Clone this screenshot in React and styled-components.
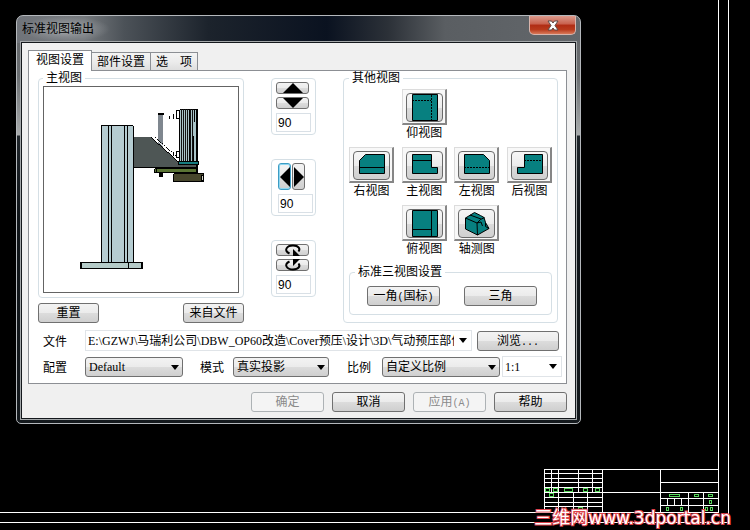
import React, { useState } from "react";
import styled, { createGlobalStyle, css } from "styled-components";

const GlobalStyle = createGlobalStyle`
    * {
        box-sizing: border-box;
    }

    body {
        margin: 0;
        background: #000;
    }

    body, button, input, select {
        font-family: "Liberation Serif", "Noto Sans CJK SC", serif;
        font-size: 12px;
        line-height: 14px;
        color: #000;
    }
`

const buttonFace = css`
    background: linear-gradient(#f3f3f3, #ebebeb 50%, #dcdcdc 51%, #cfcfcf);
    border: 1px solid #707070;
    border-radius: 3px;
`

/* drawing sheet behind the dialog */

const Desktop = styled.main`
    position: relative;
    min-height: 100vh;
    padding: 15px 169px 105px 16px;
    background: #000;
`

const OuterFrame = styled.div`
    position: absolute;
    inset: 0 21px 7px 0;
    border: solid #fff;
    border-width: 0 1px 1px 0;
`

const InnerFrame = styled.div`
    position: absolute;
    inset: 0 31px 17px 0;
    display: flex;
    justify-content: flex-end;
    align-items: flex-end;
    border: solid #fff;
    border-width: 0 1px 1px 0;
`

const Watermark = styled.div`
    position: absolute;
    right: 19px;
    bottom: 3px;
    font: 17px/18px "DejaVu Sans", "Noto Sans CJK SC", sans-serif;
    color: #fff;
    -webkit-text-stroke: 2px #dc404a;
    paint-order: stroke fill;

    span {
        font-size: 18px;
    }
`

/* window chrome */

const Dialog = styled.section`
    position: relative;
    min-width: 565px;
    padding: 0 4px 4px;
    border: 1px solid #b4b8bc;
    border-radius: 7px 7px 5px 5px;
    background:
        linear-gradient(90deg, #70747a, #74787c 12%, #4c5258 19%, #1c232c 34%, #0a1220 55%, #2c3138 66%, #5a5e62 76%, #63676b) top / 100% 27px no-repeat,
        linear-gradient(#66696c 27px, #6a6e71 60px, #a8abac 119px, #20262b 120px, #101519 200px, #14191d);
`

const TitleBar = styled.header`
    display: flex;
    justify-content: space-between;
    align-items: flex-start;
    height: 26px;
`

const Title = styled.h1`
    margin: 0;
    padding: 5px 16px 5px 1px;
    font-size: 12px;
    font-weight: normal;
    line-height: 16px;
    background: radial-gradient(closest-side, rgba(176, 180, 184, 0.9), rgba(150, 154, 158, 0.5) 60%, rgba(130, 134, 138, 0));
`

const CloseButton = styled.button`
    display: flex;
    justify-content: center;
    align-items: center;
    width: 47px;
    height: 19px;
    padding: 0;
    border: 1px solid #d8b4ac;
    border-top: 0;
    border-radius: 0 0 5px 5px;
    background: linear-gradient(#dc9a8c, #c8604c 45%, #b02c14 50%, #b83a1c 75%, #d87858);
`

const Client = styled.div`
    padding: 7px 8px 6px 6px;
    border: 1px solid #14181c;
    outline: 1px solid #a4a8aa;
    background: #f0f0f0;
`

/* tabs */

const TabList = styled.div`
    display: flex;
    align-items: flex-end;
`

const Tab = styled.button`
    height: 18px;
    padding: 0 5px;
    border: 1px solid #8c8f94;
    border-bottom: 0;
    background: linear-gradient(#f4f4f4, #ececec 50%, #dedede);

    & + & {
        border-left-width: 0;
    }

    ${props => props.$active && css`
        height: 21px;
        margin-bottom: -1px;
        padding: 0 7px 2px;
        background: #fff;
        z-index: 1;
    `}
`

const Panel = styled.div`
    padding: 0 5px 6px 9px;
    border: 1px solid #8c8f94;
    background: #fff;
`

const Columns = styled.div`
    display: grid;
    grid-template-columns: minmax(206px, 1fr) 45px 215px;
    gap: 27px;
    padding-right: 3px;
`

const Column = styled.div`
    display: flex;
    flex-direction: column;
    gap: 5px;
`

const Group = styled.fieldset`
    min-width: 0;
    margin: 0;
    padding: ${props => props.$pad || "1px 4px 4px"};
    border: 1px solid #d5dfe5;
    border-radius: 4px;
`

const Legend = styled.legend`
    padding: 0 3px;
    line-height: 14px;
`

const Preview = styled.div`
    height: 207px;
    border: 1px solid #646464;
    background: #fff;

    svg {
        display: block;
        width: 100%;
        height: 100%;
    }
`

const ButtonRow = styled.div`
    display: flex;
    justify-content: ${props => props.$justify || "space-between"};
    gap: 8px;
    padding: ${props => props.$pad || "0"};
`

const Button = styled.button`
    ${buttonFace}
    flex: none;
    width: ${props => props.$width || 73}px;
    height: 20px;
    padding: 0;
    line-height: 16px;

    &:disabled {
        color: #8a8a8a;
        border-color: #adb2b5;
        background: #f4f4f4;
    }
`

const Mono = styled.span`
    font-family: "Liberation Mono", monospace;
    font-size: 10px;
    line-height: 0;
`

/* rotation steppers */

const Steppers = styled.div`
    display: flex;
    flex-direction: column;
    gap: 24px;
    padding-top: 7px;
`

const Stepper = styled.fieldset`
    display: flex;
    flex-direction: column;
    gap: 4px;
    min-width: 0;
    height: 57px;
    margin: 0;
    padding: 3px 1px 3px ${props => props.$indent ? 6 : 4}px;
    border: 1px solid #d5dfe5;
    border-radius: 4px;
`

const StepButtons = styled.div`
    display: flex;
    flex-direction: ${props => props.$row ? "row" : "column"};
    gap: ${props => props.$row ? 1 : 3}px;
`

const StepButton = styled.button`
    ${buttonFace}
    display: flex;
    justify-content: center;
    align-items: center;
    width: ${props => props.$tall ? 13 : 33}px;
    height: ${props => props.$tall ? 27 : 12}px;
    padding: 0;

    svg {
        flex: none;
        overflow: visible;
    }

    ${props => props.$focused && css`
        border-color: #3c9cc4;
        box-shadow: inset 0 0 0 1px #8fd6f0;
    `}
`

const AngleInput = styled.input`
    width: 35px;
    height: 19px;
    padding: 0 1px;
    border: 1px solid #d9e0e6;
    font-family: "Liberation Sans", sans-serif;
`

/* other views */

const ViewGrid = styled.div`
    display: grid;
    grid-template-columns: repeat(4, 45px);
    justify-content: space-between;
    row-gap: 6px;
    padding-bottom: 8px;
`

const View = styled.label`
    grid-column: ${props => props.$column};
    display: flex;
    flex-direction: column;
    align-items: center;
    line-height: 16px;
    white-space: nowrap;
`

const ViewButton = styled.button`
    display: flex;
    width: 45px;
    height: 36px;
    padding: 3px;
    border: 1px solid #dcdcdc;
    border-right: 2px solid #868686;
    border-bottom: 2px solid #868686;
    background: #f8f8f8;
`

const ViewFace = styled.span`
    width: 37px;
    height: 29px;
    flex: none;
    border: 1px solid #6a6a6a;
    border-radius: 4px;
    background: linear-gradient(#f6f6f6, #ececec 50%, #dadada 51%, #d0d0d0);

    svg {
        display: block;
    }
`

/* bottom fields */

const Row = styled.div`
    display: flex;
    align-items: center;
    padding: ${props => props.$pad};
`

const Label = styled.label`
    flex: none;
    width: ${props => props.$width}px;
    padding-top: 2px;
`

const arrow = css`
    content: "";
    border: solid transparent;
    border-width: 5px 4px 0;
    border-top-color: #000;
`

const SelectBox = styled.div`
    position: relative;
    flex: ${props => props.$width} 0 ${props => props.$width}px;
    margin-right: ${props => props.$after}px;

    &::after {
        ${arrow}
        position: absolute;
        top: 8px;
        right: 4px;
        pointer-events: none;
    }
`

const Select = styled.select`
    ${buttonFace}
    appearance: none;
    display: block;
    width: 100%;
    height: 20px;
    padding: 0 16px 0 3px;
`

const Combo = styled.div`
    flex: ${props => props.$width} 0 ${props => props.$width}px;
    display: flex;
    min-width: 0;
    height: 21px;
    margin-right: ${props => props.$after || 0}px;
    border: 1px solid #e0e4e8;
    background: #fff;
`

const ComboInput = styled.input`
    flex: 1;
    min-width: 0;
    padding: 0 0 0 2px;
    border: 0;
    background: none;
`

const ComboButton = styled.button`
    display: flex;
    justify-content: center;
    align-items: center;
    width: 17px;
    padding: 0;
    border: 0;
    background: none;

    &::after {
        ${arrow}
    }
`

const SheetTitleBlock = () => (
    <svg width="174" height="44" viewBox="0 0 174 44" fill="none" shapeRendering="crispEdges" aria-hidden="true">
        <path
            stroke="#fff"
            d="M0 1.500H174M.5 1V44M58.5 1V44M116.5 1V44
               M0 5.500H58M0 10.500H58M0 14.500H58M0 19.500H58M0 24.500H58M0 29.500H58M0 34.500H58M0 38.500H58
               M7.500 1V24M14.500 1V44M34.500 1V24M48.500 1V24M29.500 24V44M43.500 24V44
               M58 24.500H174M116 14.500H174M116 30.500H174M116 37.500H174
               M144.500 24V44M159.500 24V44M123.500 30V37M130.500 30V37M137.500 30V37"
        />
        <path
            stroke="#58d85c"
            d="M1.500 20.500h4v3h-4zM9.500 20.500h4v3h-4zM20.500 20.500h8v3h-8zM39.500 20.500h4v3h-4zM51.500 20.500h4v3h-4z
               M5.500 25.500h4v3h-4zM34.500 39.500h4v3h-4zM125.500 26.500h10v2h-10zM150.500 26.500h4v2h-4zM164.500 26.500h4v2h-4z
               M165.500 32.500h2v3h-2zM122.500 39.500h2v3h-2zM136.500 39.500h2v3h-2zM161.500 39.500h2v3h-2zM166.500 39.500h2v3h-2z"
        />
    </svg>
)

const ModelDrawing = () => (
    <svg viewBox="44 87 195 205" shapeRendering="crispEdges" role="img" aria-label="主视图">
        <path d="M159 113h5v34h-5z" fill="#7f878f" />
        <path d="M159 113h6v2h-6z" />
        <path d="M134 137h18l28 25h18v6h-64z" fill="#4e5655" />
        <path d="M134 167.500h64M152 137.500l28 25" fill="none" stroke="#000" />
        <path d="M154 137l25 22" fill="none" stroke="#fff" />
        <path d="M155.500 137l24 21" fill="none" stroke="#000" strokeDasharray="2 1" />
        <path d="M170.500 116v3M174.500 114v5M177.500 110v9M177 110.500h3M177 118.500h3M174.500 152v4M177.500 151v7M177 151.500h3" stroke="#000" />
        <path d="M180.500 109.500h18v52h-18z" fill="#a9c4c8" stroke="#000" />
        <path d="M182.500 109v52M184.500 109v52M186.500 109v52M188.500 109v52M191.500 109v52M193.500 109v52" stroke="#111" />
        <path d="M190.500 109v52M195.500 109v13M194.500 136v25M197.500 109v52" stroke="#000" />
        <path d="M179.500 161.500h20v3h-20z" fill="#167c80" stroke="#000" />
        <path d="M198.500 164v9" stroke="#000" />
        <path d="M155.500 168.500h43v4h-43z" fill="#5a7434" stroke="#000" />
        <path d="M157.500 168v4M197.500 165v7" stroke="#000" />
        <path d="M160 173h4v4h-4z" />
        <path d="M174.500 173.500h30v8h-30z" fill="#47462c" stroke="#000" />
        <path d="M202 175h2v5h-2z" fill="#d8d8c8" stroke="#000" />
        <path d="M101.500 125.500h32v137h-32z" fill="#b5ccd1" stroke="#000" />
        <path d="M108.500 125v137M111.500 125v137M124.500 125v137M127.500 125v137" stroke="#000" />
        <path d="M80.500 262.500h63v6h-63z" fill="#b5cbc8" stroke="#000" />
        <path d="M81.500 262v7M128.500 262v7M142.500 262v7" stroke="#000" />
    </svg>
)

const stepIcons = {
    up: <svg width="20" height="10"><path d="M10 0l10 10H0z" /></svg>,
    down: <svg width="20" height="10"><path d="M0 0h20L10 10z" /></svg>,
    left: <svg width="10" height="20"><path d="M10 0v20L0 10z" /></svg>,
    right: <svg width="10" height="20"><path d="M0 0l10 10L0 20z" /></svg>,
    rotateUp: (
        <svg width="18" height="12">
            <path d="M5.500 9.500C-1 6.500 3 1.500 9 1.500c6 0 7.500 3.500 5.500 6" fill="none" stroke="#000" strokeWidth="2" />
            <path d="M9 5v7h7z" />
        </svg>
    ),
    rotateDown: (
        <svg width="18" height="12">
            <path d="M5.500 2.500C-1 5.500 3 10.500 9 10.500c6 0 7.500-3.500 5.500-6" fill="none" stroke="#000" strokeWidth="2" />
            <path d="M9 7V0h7z" />
        </svg>
    )
}

const viewShapes = {
    bottom: { body: "M10.500 5.500h25v26h-25z", dashed: "M10 11.500h19M29.500 6v25" },
    right: { body: "M10.500 26.500v-13l6-6h19v19z", solid: "M10 20.500h25" },
    front: { body: "M10.500 7.500h19v13h6v6h-25z", solid: "M10 13.500h19" },
    left: { body: "M10.500 7.500h19l6 6v13h-25z", dashed: "M10 20.500h25" },
    back: { body: "M17.500 7.500h18v19h-25v-6h7z", dashed: "M17 13.500h18" },
    top: { body: "M10.500 5.500h25v26h-25z", solid: "M10 24.500h19M29.500 5v26" },
    iso: {
        body: "M11.500 13l9-5.500 6 3 3.500 2 1.500 5 3.500 6-11.500 6.500-12-6z",
        solid: "M11.500 13l11.500 5 3.500-3.500 4-2M16 10l11 4M23 18l.5 12M23 18l4-1 1.500 4M31.500 17.500v4l3.500 2"
    }
}

const ViewIcon = ({shape}) => {
    const { body, solid, dashed } = viewShapes[shape];
    return (
        <svg width="35" height="27" viewBox="5 5 35 27" fill="none" stroke="#000" aria-hidden="true">
            <path d={body} fill="#078080" />
            {solid && <path d={solid} />}
            {dashed && <path d={dashed} strokeDasharray="2 1" />}
        </svg>
    )
}

const views = [
    { shape: "bottom", name: "仰视图", column: 2 },
    { shape: "right", name: "右视图", column: 1 },
    { shape: "front", name: "主视图", column: 2 },
    { shape: "left", name: "左视图", column: 3 },
    { shape: "back", name: "后视图", column: 4 },
    { shape: "top", name: "俯视图", column: 2 },
    { shape: "iso", name: "轴测图", column: 3 }
]

const steppers = [
    { name: "上下", icons: ["up", "down"] },
    { name: "左右", icons: ["left", "right"], row: true },
    { name: "旋转", icons: ["rotateUp", "rotateDown"] }
]

const AngleStepper = ({name, icons, row}) => (
    <Stepper $indent={row} aria-label={name}>
        <StepButtons $row={row}>
            {icons.map((icon, i) => (
                <StepButton key={icon} $tall={row} $focused={row && i === 0} aria-label={icon}>
                    {stepIcons[icon]}
                </StepButton>
            ))}
        </StepButtons>
        <AngleInput defaultValue="90" aria-label={name + "角度"} />
    </Stepper>
)

const Dropdown = ({id, width, after, options}) => (
    <SelectBox $width={width} $after={after}>
        <Select id={id}>
            {options.map(option => <option key={option}>{option}</option>)}
        </Select>
    </SelectBox>
)

const tabs = ["视图设置", "部件设置", "选　项"];

export default function App() {
    const [activeTab, setActiveTab] = useState(0);

    return (
        <Desktop>
            <GlobalStyle />
            <OuterFrame />
            <InnerFrame>
                <SheetTitleBlock />
            </InnerFrame>
            <Watermark><span>三维网</span>www.3dportal.cn</Watermark>

            <Dialog role="dialog" aria-labelledby="title">
                <TitleBar>
                    <Title id="title">标准视图输出</Title>
                    <CloseButton aria-label="关闭">
                        <svg width="12" height="11" viewBox="0 0 12 11">
                            <path
                                d="M1 1h3.500L6 3l1.500-2H11L8 5.500 11 10H7.500L6 8l-1.500 2H1l3-4.500z"
                                fill="#fff"
                                stroke="#5c4a48"
                            />
                        </svg>
                    </CloseButton>
                </TitleBar>
                <Client>
                    <TabList role="tablist">
                        {tabs.map((tab, i) => (
                            <Tab
                                key={tab}
                                role="tab"
                                aria-selected={i === activeTab}
                                $active={i === activeTab}
                                onClick={() => setActiveTab(i)}
                            >
                                {tab}
                            </Tab>
                        ))}
                    </TabList>
                    <Panel>
                        <Columns>
                            <Column>
                                <Group>
                                    <Legend>主视图</Legend>
                                    <Preview><ModelDrawing /></Preview>
                                </Group>
                                <ButtonRow>
                                    <Button $width={61}>重置</Button>
                                    <Button $width={61}>来自文件</Button>
                                </ButtonRow>
                            </Column>
                            <Steppers>
                                {steppers.map(stepper => <AngleStepper key={stepper.name} {...stepper} />)}
                            </Steppers>
                            <Group $pad="4px 5px 6px">
                                <Legend>其他视图</Legend>
                                <ViewGrid>
                                    {views.map(({shape, name, column}) => (
                                        <View key={shape} $column={column}>
                                            <ViewButton>
                                                <ViewFace><ViewIcon shape={shape} /></ViewFace>
                                            </ViewButton>
                                            {name}
                                        </View>
                                    ))}
                                </ViewGrid>
                                <Group $pad="7px 5px 8px">
                                    <Legend>标准三视图设置</Legend>
                                    <ButtonRow $pad="0 9px 0 12px">
                                        <Button>一角<Mono>(</Mono>国标<Mono>)</Mono></Button>
                                        <Button>三角</Button>
                                    </ButtonRow>
                                </Group>
                            </Group>
                        </Columns>
                        <Row $pad="7px 2px 0 5px">
                            <Label $width={42} htmlFor="file">文件</Label>
                            <Combo $width={387} $after={5}>
                                <ComboInput
                                    id="file"
                                    defaultValue="E:\GZWJ\马瑞利公司\DBW_OP60改造\Cover预压\设计\3D\气动预压部件"
                                />
                                <ComboButton aria-label="最近文件" />
                            </Combo>
                            <Button $width={82}>浏览<Mono>...</Mono></Button>
                        </Row>
                        <Row $pad="5px 0 0 5px">
                            <Label $width={42} htmlFor="config">配置</Label>
                            <Dropdown id="config" width={98} after={17} options={["Default"]} />
                            <Label $width={33} htmlFor="mode">模式</Label>
                            <Dropdown id="mode" width={96} after={18} options={["真实投影"]} />
                            <Label $width={35} htmlFor="scale">比例</Label>
                            <Dropdown id="scale" width={118} after={2} options={["自定义比例"]} />
                            <Combo $width={60}>
                                <ComboInput defaultValue="1:1" aria-label="比例值" />
                                <ComboButton aria-label="选择比例" />
                            </Combo>
                        </Row>
                    </Panel>
                    <ButtonRow $justify="flex-end" $pad="8px 0 0">
                        <Button disabled>确定</Button>
                        <Button>取消</Button>
                        <Button disabled>应用<Mono>(A)</Mono></Button>
                        <Button>帮助</Button>
                    </ButtonRow>
                </Client>
            </Dialog>
        </Desktop>
    )
}
